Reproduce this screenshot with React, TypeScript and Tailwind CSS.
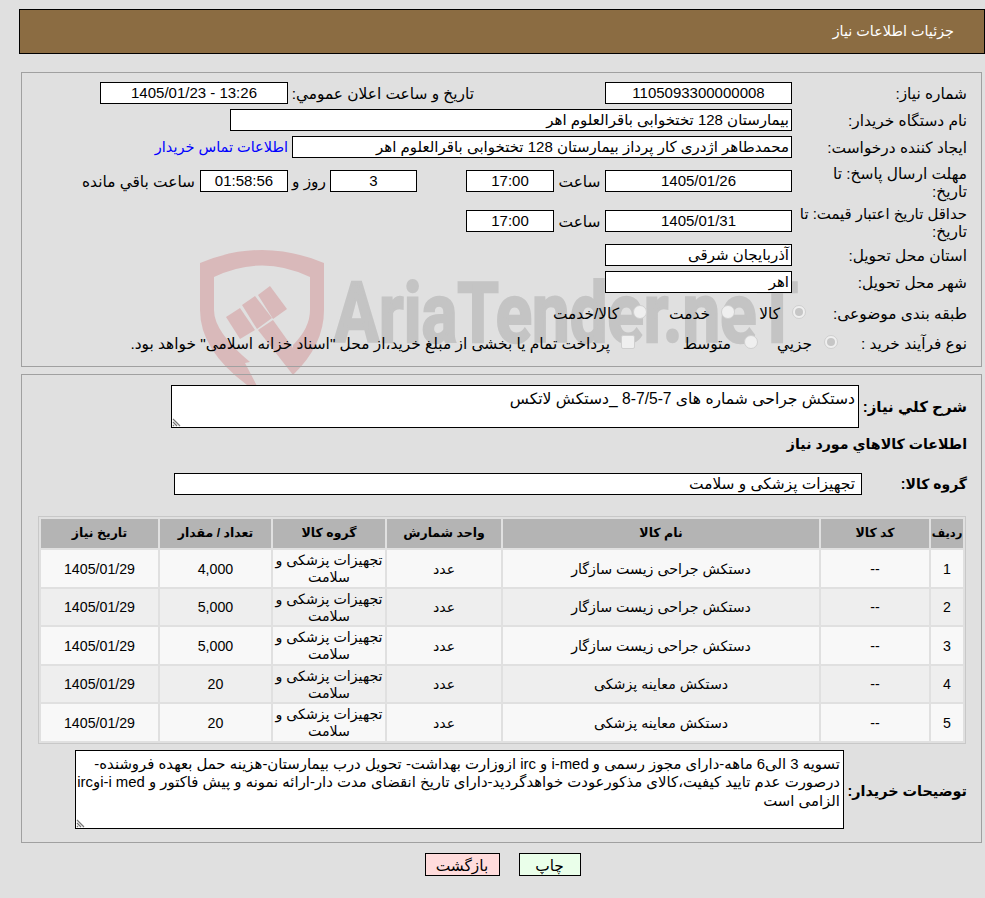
const fontStack = { fontFamily: '"Liberation Sans", "DejaVu Sans", sans-serif' }

function Box({ w, children, className = "" }: { w: string; children?: React.ReactNode; className?: string }) {
  return (
    <div className={`${w} h-[22px] shrink-0 whitespace-nowrap border border-black bg-white px-[2px] text-[15px] leading-[20px] ${className}`}>
      {children}
    </div>
  )
}

function Label({ children, w = "w-[175px]", className = "pt-[2px] leading-[20px]" }: { children: React.ReactNode; w?: string; className?: string }) {
  return <div className={`${w} shrink-0 whitespace-nowrap text-[15.4px] ${className}`}>{children}</div>
}

function Radio({ on }: { on?: boolean }) {
  return (
    <span className="-mt-[3px] flex h-[14px] w-[14px] shrink-0 items-center justify-center rounded-full border border-[#cfcfcf] bg-[#efefef]">
      {on && <span className="h-[8px] w-[8px] rounded-full bg-[#c6c6c6]" />}
    </span>
  )
}

function Grip() {
  return (
    <svg className="absolute bottom-0 left-0" width="10" height="10" viewBox="0 0 10 10">
      <path d="M1 2 L8 9 M1 5 L5 9 M1 8 L2 9" stroke="#777" strokeWidth="1.2" fill="none" />
    </svg>
  )
}

const rows = [
  ["1", "دستکش جراحی زیست سازگار", "4,000"],
  ["2", "دستکش جراحی زیست سازگار", "5,000"],
  ["3", "دستکش جراحی زیست سازگار", "5,000"],
  ["4", "دستکش معاینه پزشکی", "20"],
  ["5", "دستکش معاینه پزشکی", "20"],
]

export default function App() {
  return (
    <div dir="rtl" style={fontStack} className="relative h-[898px] overflow-hidden bg-[#e0e0e0] text-black">
      {/* watermark */}
      <svg className="pointer-events-none absolute left-[190px] top-[240px]" width="620" height="170" viewBox="0 0 620 170">
        <g fill="#d9b9ba">
          <path d="M10 23 Q72 -3 134 23 V70 Q134 105 103 135 V105 Q120 88 120 70 V37 Q72 14 24 37 V70 Q24 92 60 122 L55 123 L67 146 L57 145 Q10 110 10 70 Z" />
          <path d="M36 77 L50 68 L65 90 L50 99 Z" />
          <path d="M52 65 L65 56 L82 78 L67 89 Z" />
          <path d="M68 55 L80 46 L97 69 L83 79 Z" />
          <path d="M68 90 L83 80 L103 108 V135 Z" />
        </g>
        <text x="144" y="102" direction="ltr" fontFamily="Roboto, sans-serif" fontWeight="700" fontSize="84" fill="#c4c4c4" stroke="#c4c4c4" strokeWidth="2.5" textLength="464" lengthAdjust="spacingAndGlyphs">
          AriaTender.neT
        </text>
      </svg>

      <div className="relative ml-[19px] mt-[9px] flex h-[45px] items-center border border-black bg-[#8b6c42] pr-[30px] text-[14.4px] text-white">
        جزئیات اطلاعات نیاز
      </div>

      {/* main form panel */}
      <div className="relative ml-[21px] mr-[3px] mt-[18px] h-[295px] border border-[#a0a0a0] pr-[14px] pt-[9px]">
        <div className="flex h-[22px] items-center">
          <Label>شماره نیاز:</Label>
          <Box w="w-[187px]" className="text-center">1105093300000008</Box>
          <div className="w-[131px] shrink-0" />
          <div className="w-[181px] shrink-0 whitespace-nowrap pt-[2px] text-[15.4px]">تاریخ و ساعت اعلان عمومي:</div>
          <Box w="w-[188px]" className="mr-[5px] text-center">13:26 - 1405/01/23</Box>
        </div>

        <div className="mt-[5px] flex h-[22px] items-center">
          <Label>نام دستگاه خریدار:</Label>
          <Box w="w-[562px]">بیمارستان 128 تختخوابی باقرالعلوم اهر</Box>
        </div>

        <div className="mt-[5px] flex h-[22px] items-center">
          <Label>ایجاد کننده درخواست:</Label>
          <Box w="w-[500px]" className="text-[14.7px]">محمدطاهر اژدری کار پرداز بیمارستان 128 تختخوابی باقرالعلوم اهر</Box>
          <a className="mr-1 whitespace-nowrap pt-[2px] text-[14.5px] text-[#0000ff]">اطلاعات تماس خریدار</a>
        </div>

        <div className="mt-[12px] flex h-[22px] items-center">
          <Label className="pt-[4px] leading-[18px]">
            مهلت ارسال پاسخ: تا
            <br />
            تاریخ:
          </Label>
          <Box w="w-[187px]" className="text-center">1405/01/26</Box>
          <div className="w-[51px] shrink-0 pt-[2px] text-center text-[15.4px]">ساعت</div>
          <Box w="w-[88px]" className="text-center">17:00</Box>
          <div className="w-[49px] shrink-0" />
          <Box w="w-[87px]" className="text-center">3</Box>
          <div className="w-[42px] shrink-0 pt-[2px] text-center text-[15.4px]">روز و</div>
          <Box w="w-[88px]" className="bg-[#fffff0] text-center">01:58:56</Box>
          <div className="mr-[5px] whitespace-nowrap pt-[2px] text-[15.4px]">ساعت باقي مانده</div>
        </div>

        <div className="mt-[18px] flex h-[22px] items-center">
          <Label className="pt-[4px] leading-[18px]">
            <span className="text-[14.9px]">حداقل تاریخ اعتبار قیمت: تا</span>
            <br />
            تاریخ:
          </Label>
          <Box w="w-[187px]" className="text-center">1405/01/31</Box>
          <div className="w-[51px] shrink-0 pt-[2px] text-center text-[15.4px]">ساعت</div>
          <Box w="w-[88px]" className="text-center">17:00</Box>
        </div>

        <div className="mt-[12px] flex h-[22px] items-center">
          <Label>استان محل تحویل:</Label>
          <Box w="w-[187px]">آذربایجان شرقی</Box>
        </div>

        <div className="mt-[5px] flex h-[22px] items-center">
          <Label>شهر محل تحویل:</Label>
          <Box w="w-[187px]">اهر</Box>
        </div>

        <div className="mt-[10px] flex h-[20px] items-center text-[15.4px]">
          <Label w="w-[161px]">طبقه بندی موضوعی:</Label>
          <Radio on />
          <span className="mr-[12px] w-[45px] shrink-0 pt-[2px]">کالا</span>
          <Radio />
          <span className="mr-[11px] w-[63px] shrink-0 pt-[2px]">خدمت</span>
          <Radio />
          <span className="mr-[14px] whitespace-nowrap pt-[2px]">کالا/خدمت</span>
        </div>

        <div className="mt-[10px] flex h-[20px] items-center text-[15.4px]">
          <Label w="w-[129px]">نوع فرآیند خرید :</Label>
          <Radio on />
          <span className="mr-[12px] w-[54px] shrink-0 pt-[2px]">جزیي</span>
          <Radio />
          <span className="mr-[13px] w-[96px] shrink-0 pt-[2px]">متوسط</span>
          <div className="-mt-[3px] h-[14px] w-[14px] shrink-0 rounded-[2px] border border-[#cfcfcf] bg-[#efefef]" />
          <span className="mr-[11px] whitespace-nowrap pt-[2px]">پرداخت تمام یا بخشی از مبلغ خرید،از محل "اسناد خزانه اسلامی" خواهد بود.</span>
        </div>
      </div>

      {/* second panel */}
      <div className="relative ml-[21px] mr-[3px] mt-[7px] h-[469px] border border-[#a0a0a0] pr-[14px] pt-[10px]">
        <div className="flex items-start">
          <div className="mt-[12px] w-[108px] shrink-0 whitespace-nowrap text-[15px] font-bold leading-[20px]">شرح کلي نیاز:</div>
          <div className="relative h-[43px] w-[688px] shrink-0 border border-black bg-white px-[3px] pt-[3px] text-[15.6px] leading-[20px]">
            دستکش جراحی شماره های 7-7/5-8 _دستکش لاتکس
            <Grip />
          </div>
        </div>
        <div className="mt-[6px] text-[14.2px] font-bold leading-[20px]">اطلاعات کالاهاي مورد نیاز</div>
        <div className="mt-[19px] flex items-center">
          <div className="w-[105px] shrink-0 text-[14px] font-bold">گروه کالا:</div>
          <div className="h-[22px] w-[688px] shrink-0 border border-black bg-white px-[6px] text-[15.4px] leading-[20px]">تجهیزات پزشکی و سلامت</div>
        </div>

        <div className="ml-[16px] mr-px mt-[21px] border border-[#c8c8c8]">
          <table className="w-full table-fixed border-separate border-spacing-[2px] text-center text-[14.2px]">
            <colgroup>
              <col className="w-[32px]" />
              <col className="w-[108px]" />
              <col className="w-[316px]" />
              <col className="w-[114px]" />
              <col className="w-[112px]" />
              <col className="w-[111px]" />
              <col />
            </colgroup>
            <thead>
              <tr className="h-[29px] bg-[#b4b4b4] text-[12.5px] font-bold">
                <th className="whitespace-nowrap text-[11.5px]">ردیف</th>
                <th>کد کالا</th>
                <th>نام کالا</th>
                <th>واحد شمارش</th>
                <th>گروه کالا</th>
                <th>تعداد / مقدار</th>
                <th>تاریخ نیاز</th>
              </tr>
            </thead>
            <tbody>
              {rows.map((r, i) => (
                <tr key={r[0]} className={`h-[36.5px] [&>td]:pt-[2px] ${i % 2 === 0 ? "bg-[#f8f8f8]" : "bg-[#eeeeee]"}`}>
                  <td>{r[0]}</td>
                  <td>--</td>
                  <td>{r[1]}</td>
                  <td>عدد</td>
                  <td className="leading-[17px]">تجهیزات پزشکی و سلامت</td>
                  <td>{r[2]}</td>
                  <td>1405/01/29</td>
                </tr>
              ))}
            </tbody>
          </table>
        </div>

        <div className="mt-[6px] flex items-center">
          <div className="mt-[6px] w-[123px] shrink-0 whitespace-nowrap text-[14.4px] font-bold">توضیحات خریدار:</div>
          <div className="relative h-[79px] w-[769px] shrink-0 whitespace-nowrap border border-black bg-white px-[3px] pt-[4px] text-[14.9px] leading-[18.5px]">
            تسویه 3 الی6 ماهه-دارای مجوز رسمی و i-med و irc ازوزارت بهداشت- تحویل درب بیمارستان-هزینه حمل بعهده فروشنده-
            <br />
            درصورت عدم تایید کیفیت،کالای مذکورعودت خواهدگردید-دارای تاریخ انقضای مدت دار-ارائه نمونه و پیش فاکتور و i-i medوirc
            <br />
            الزامی است
            <Grip />
          </div>
        </div>
      </div>

      <div className="relative mt-[10px] flex justify-center gap-[19px] pl-[20px]">
        <button className="h-[23px] w-[62px] border border-black bg-[#eaffea] text-[15.4px]">چاپ</button>
        <button className="h-[23px] w-[75px] border border-black bg-[#ffdcdc] text-[15.4px]">بازگشت</button>
      </div>
    </div>
  )
}
